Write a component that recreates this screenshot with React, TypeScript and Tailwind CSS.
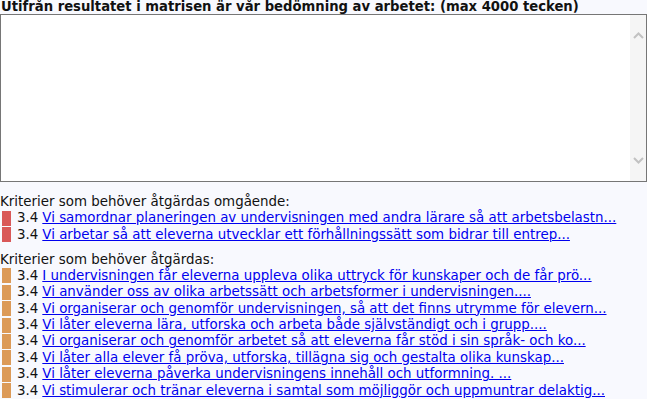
import React from "react";

interface Criterion {
  level: string;
  text: string;
}

const urgent: Criterion[] = [
  { level: "3.4", text: "Vi samordnar planeringen av undervisningen med andra lärare så att arbetsbelastn..." },
  { level: "3.4", text: "Vi arbetar så att eleverna utvecklar ett förhållningssätt som bidrar till entrep..." },
];

const needed: Criterion[] = [
  { level: "3.4", text: "I undervisningen får eleverna uppleva olika uttryck för kunskaper och de får prö..." },
  { level: "3.4", text: "Vi använder oss av olika arbetssätt och arbetsformer i undervisningen...." },
  { level: "3.4", text: "Vi organiserar och genomför undervisningen, så att det finns utrymme för elevern..." },
  { level: "3.4", text: "Vi låter eleverna lära, utforska och arbeta både självständigt och i grupp...." },
  { level: "3.4", text: "Vi organiserar och genomför arbetet så att eleverna får stöd i sin språk- och ko..." },
  { level: "3.4", text: "Vi låter alla elever få pröva, utforska, tillägna sig och gestalta olika kunskap..." },
  { level: "3.4", text: "Vi låter eleverna påverka undervisningens innehåll och utformning. ..." },
  { level: "3.4", text: "Vi stimulerar och tränar eleverna i samtal som möjliggör och uppmuntrar delaktig..." },
];

const CriteriaList: React.FC<{ title: string; items: Criterion[]; color: string }> = ({ title, items, color }) => (
  <div>
    <div className="leading-[16px] text-[#111]">{title}</div>
    {items.map((item, i) => (
      <div key={i} className="flex items-center h-[16.4px] whitespace-nowrap">
        <span className={`ml-[2px] w-[9px] h-[15px] shrink-0 ${color}`} />
        <span className="ml-[6px] text-[#111]">{item.level}</span>
        <a href="#" className="ml-[4px] text-[#0000ee] underline">
          {item.text}
        </a>
      </div>
    ))}
  </div>
);

const App: React.FC = () => {
  return (
    <div
      className="min-h-[399px] w-[647px] bg-[#f8f9fe] text-[13.4px] overflow-hidden"
      style={{ fontFamily: '"DejaVu Sans", Verdana, sans-serif' }}
    >
      <div className="font-bold text-[13.2px] leading-[14px] pl-[1px] text-[#111]">
        Utifrån resultatet i matrisen är vår bedömning av arbetet: (max 4000 tecken)
      </div>

      {/* Textarea med egen rullningslist */}
      <div className="flex h-[168px] border border-[#767676] bg-white">
        <textarea className="flex-1 resize-none outline-none bg-white" />
        <div className="w-[16px] bg-[#f5f5f5] flex flex-col items-center justify-between py-[17px]">
          <svg width="11" height="7" viewBox="0 0 11 7">
            <path d="M1 6 L5.5 1.5 L10 6" fill="none" stroke="#c2c2c2" strokeWidth="2" />
          </svg>
          <svg width="11" height="7" viewBox="0 0 11 7">
            <path d="M1 1 L5.5 5.5 L10 1" fill="none" stroke="#c2c2c2" strokeWidth="2" />
          </svg>
        </div>
      </div>

      <div className="mt-[12px]">
        <CriteriaList title="Kriterier som behöver åtgärdas omgående:" items={urgent} color="bg-[#d95858]" />
      </div>
      <div className="mt-[9px]">
        <CriteriaList title="Kriterier som behöver åtgärdas:" items={needed} color="bg-[#dc9a58]" />
      </div>
    </div>
  );
};

export default App;
